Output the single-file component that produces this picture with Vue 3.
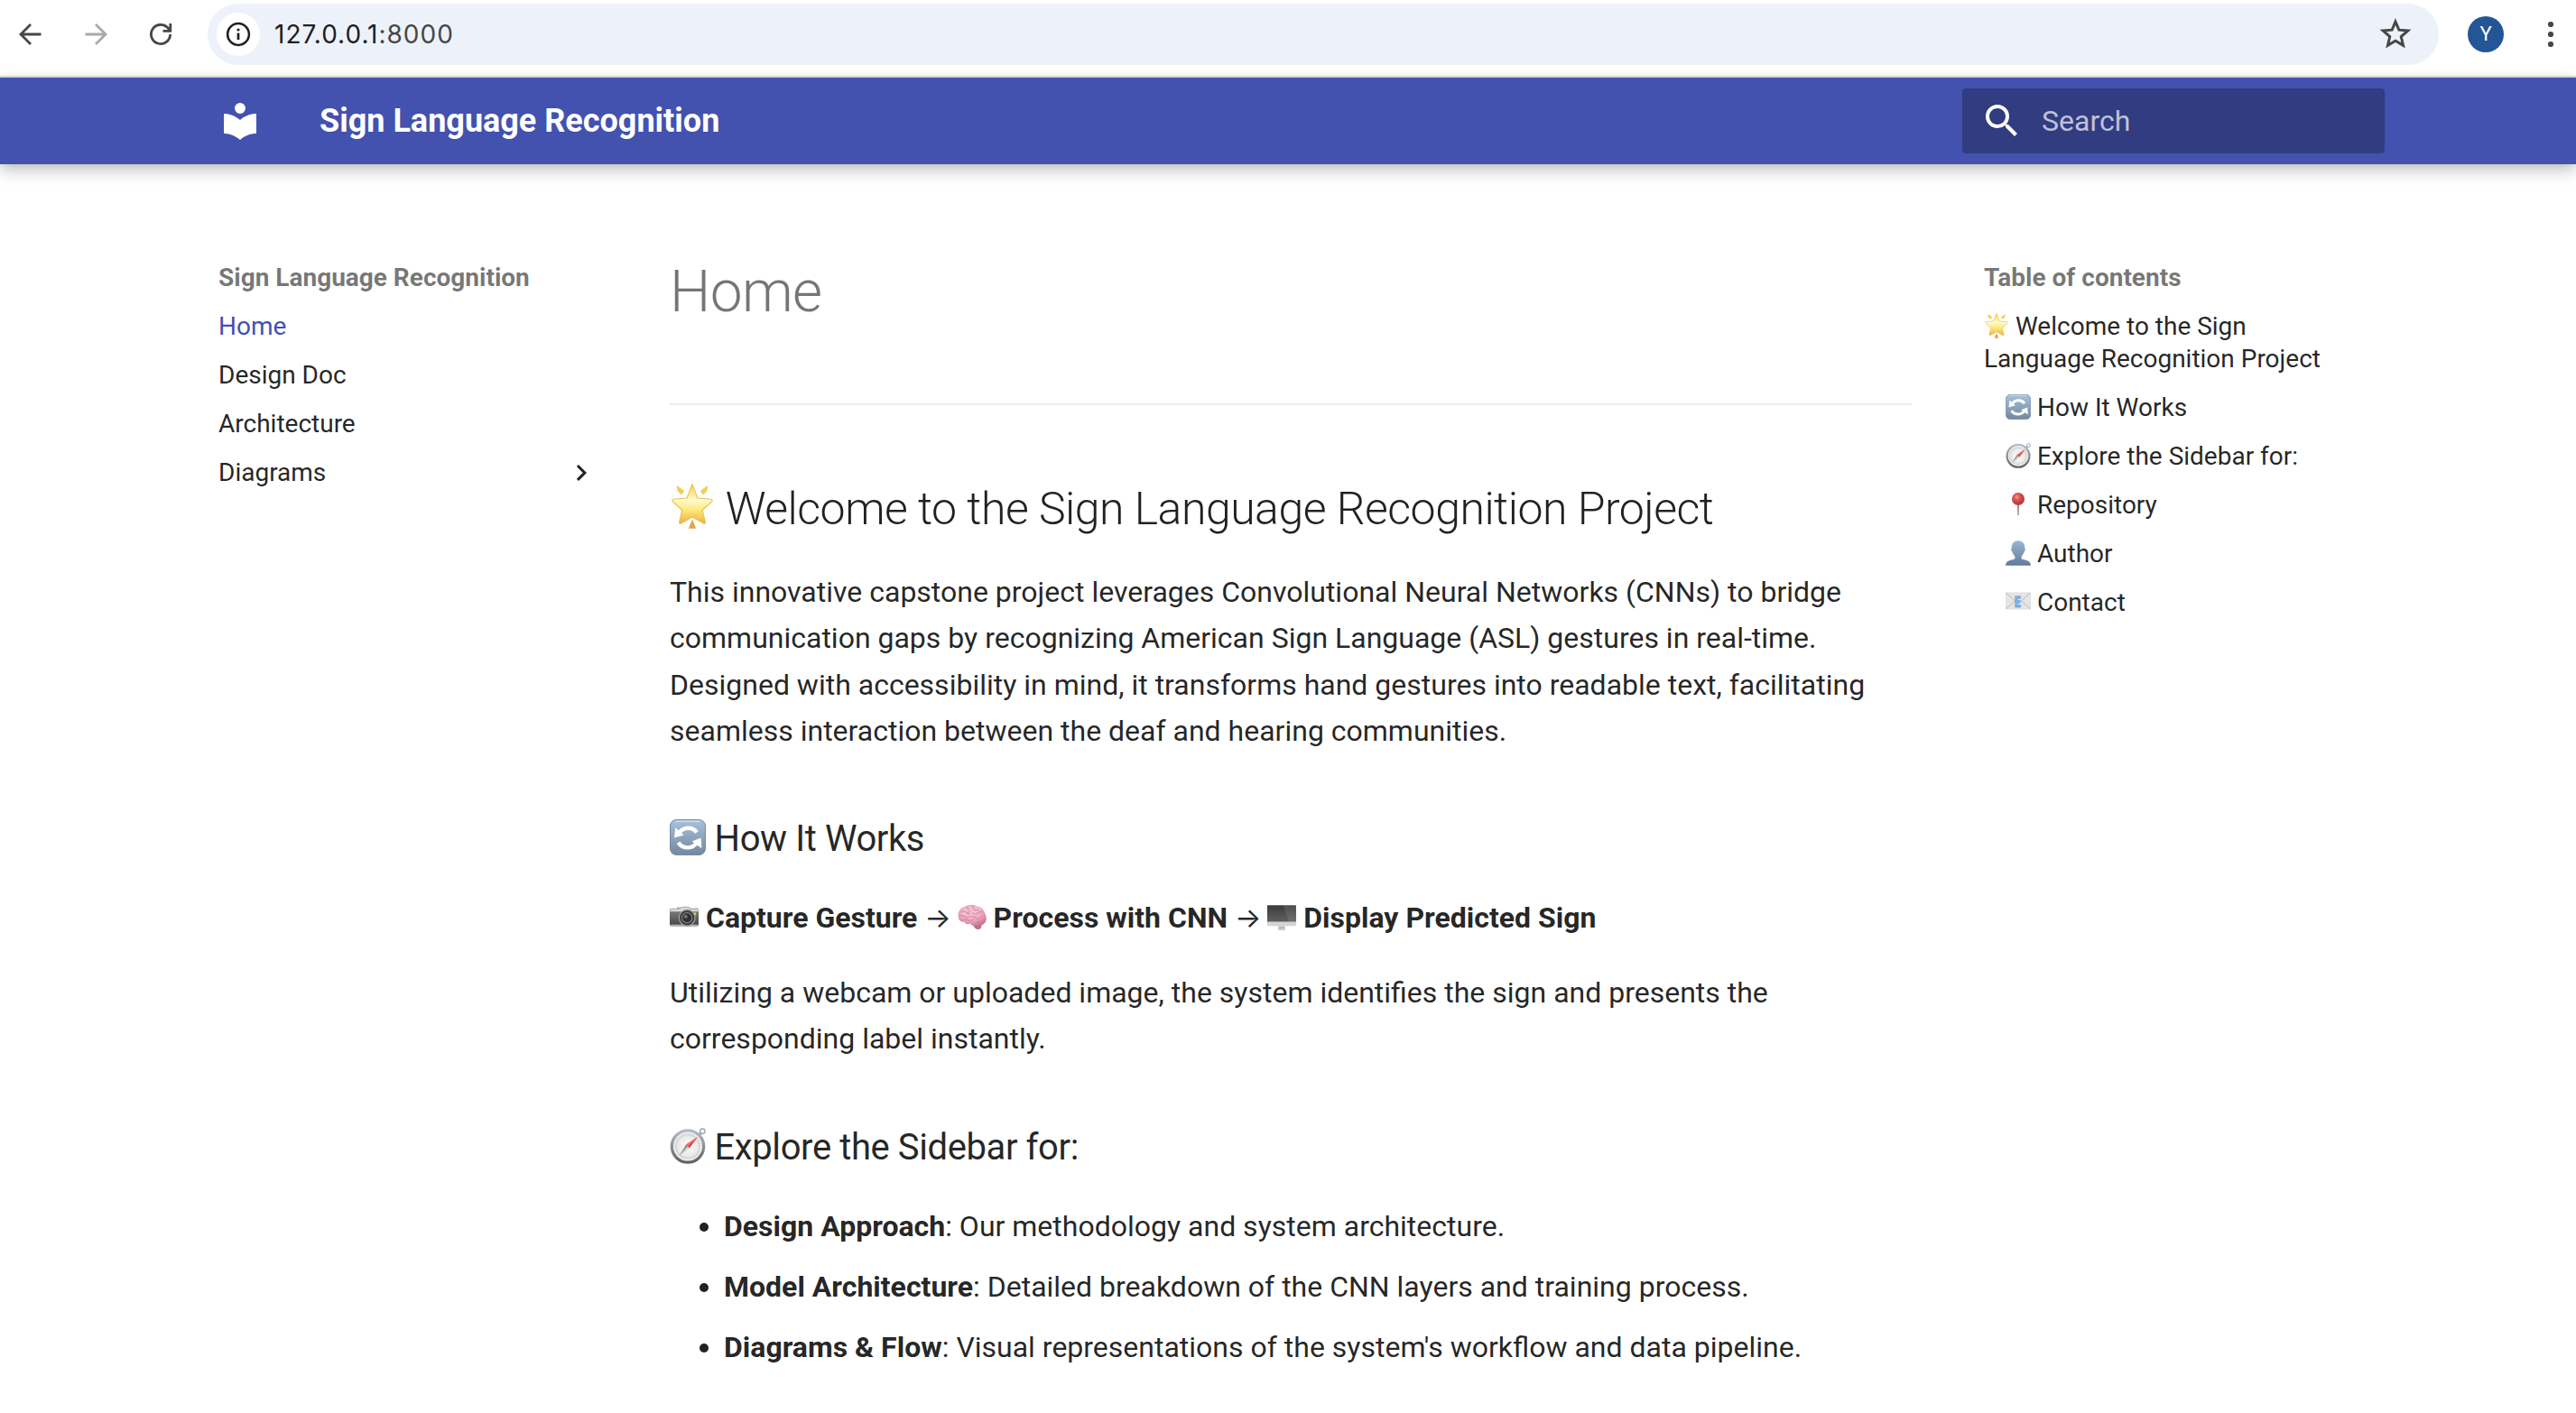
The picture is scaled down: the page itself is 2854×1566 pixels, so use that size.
<script setup>
const navItems = [
  { label: 'Home', active: true },
  { label: 'Design Doc' },
  { label: 'Architecture' },
  { label: 'Diagrams', nested: true },
]

const tocItems = [
  { icon: 'refresh', label: 'How It Works' },
  { icon: 'compass', label: 'Explore the Sidebar for:' },
  { icon: 'pin', label: 'Repository' },
  { icon: 'person', label: 'Author' },
  { icon: 'mail', label: 'Contact' },
]

const topics = [
  { name: 'Design Approach', text: 'Our methodology and system architecture.' },
  { name: 'Model Architecture', text: 'Detailed breakdown of the CNN layers and training process.' },
  { name: 'Diagrams & Flow', text: "Visual representations of the system's workflow and data pipeline." },
]
</script>

<template>
  <div class="window">
    <svg class="sprite" width="0" height="0" aria-hidden="true">
      <defs>
        <linearGradient id="g-star" x1="0" y1="0" x2="0" y2="1">
          <stop offset="0" stop-color="#f8d24e" /><stop offset=".4" stop-color="#fffbd0" />
          <stop offset=".65" stop-color="#fdea7c" /><stop offset="1" stop-color="#e9b045" />
        </linearGradient>
        <linearGradient id="g-blue" x1="0" y1="0" x2="0" y2="1">
          <stop offset="0" stop-color="#a9c1dc" /><stop offset="1" stop-color="#73879f" />
        </linearGradient>
        <linearGradient id="g-person" x1="0" y1="0" x2="0" y2="1">
          <stop offset="0" stop-color="#9db6d0" /><stop offset="1" stop-color="#5f7c9d" />
        </linearGradient>
        <linearGradient id="g-rim" x1="0" y1="0" x2="0" y2="1">
          <stop offset="0" stop-color="#b3bdc9" /><stop offset="1" stop-color="#5f6266" />
        </linearGradient>
        <radialGradient id="g-face"><stop offset="0" stop-color="#fff" /><stop offset="1" stop-color="#dcdcdc" /></radialGradient>
        <radialGradient id="g-red" cx=".4" cy=".35"><stop offset="0" stop-color="#f19a92" /><stop offset=".5" stop-color="#dc5550" /><stop offset="1" stop-color="#b9403e" /></radialGradient>
        <radialGradient id="g-brain" cx=".45" cy=".35" r=".7"><stop offset="0" stop-color="#f9c6d6" /><stop offset=".6" stop-color="#eba3bb" /><stop offset="1" stop-color="#c9708e" /></radialGradient>
        <linearGradient id="g-cam" x1="0" y1="0" x2="0" y2="1">
          <stop offset="0" stop-color="#777" /><stop offset="1" stop-color="#454545" />
        </linearGradient>
        <linearGradient id="g-screen" x1="0" y1="0" x2="0" y2="1">
          <stop offset="0" stop-color="#3b3b3b" /><stop offset="1" stop-color="#686868" />
        </linearGradient>
      </defs>
      <symbol id="e-star" viewBox="0 0 40 40">
        <g transform="translate(1.400 0) scale(.93 1)">
          <path fill="url(#g-star)" stroke="#edc04c" stroke-width="1" stroke-linejoin="round" d="M20 .5 25 12.800 38 13.800C39.300 14.200 39.300 15.300 38.400 16L29.600 23.600 32.400 34.400C32.400 35.400 31.600 35.700 30.800 35.200L20 29.600 9.200 35.200C8.400 35.700 7.600 35.400 7.600 34.400L10.400 23.600 1.600 16C.7 15.300.7 14.200 2 13.800L15 12.800Z" />
          <path fill="#f1ce55" d="M5.500 1.500 12.500 6.500 10 9.700Q4.500 7.500 5.500 1.500ZM34.500 1.500 27.500 6.500 30 9.700Q35.500 7.500 34.500 1.500Z" />
          <path fill="#dfa745" d="M20 31.500 23.600 39.800H16.400Z" />
        </g>
      </symbol>
      <symbol id="e-refresh" viewBox="0 0 40 40">
        <rect x=".5" y=".5" width="39" height="39" rx="7" fill="url(#g-blue)" stroke="#7489a3" />
        <path d="M7 2.2H33" stroke="#cfdded" stroke-width="1.4" stroke-linecap="round" />
        <g fill="none" stroke="#fff" stroke-width="4.4">
          <path d="M10.5 15.5C14 8.6 25 7.4 30 14.6" /><path d="M30 25.5C26 33 14.5 33.6 9.5 25.8" />
        </g>
        <path fill="#fff" d="M6.3 9.2 5 20.6 15.6 17.4ZM34.6 20.6 35.4 32.2 24.6 24.6Z" />
      </symbol>
      <symbol id="e-compass" viewBox="0 0 40 40">
        <circle cx="36.3" cy="3.8" r="2.7" fill="none" stroke="#a3abb4" stroke-width="1.5" />
        <path d="M32.5 7.5 34.6 5.5" stroke="#98a0aa" stroke-width="3" />
        <circle cx="20" cy="20.5" r="17.7" fill="url(#g-face)" stroke="url(#g-rim)" stroke-width="3.2" />
        <circle cx="20" cy="20.5" r="15.3" fill="none" stroke="#f3f3f3" stroke-width="1" />
        <circle cx="20" cy="20.5" r="13" fill="none" stroke="#b5b5b5" stroke-width="1.6" stroke-dasharray=".6 1.3" />
        <path fill="#8d9092" d="M10.6 30.8 18 18.5 22 22.3Z" />
        <path fill="#d9dadb" d="M10.6 30.8 20 20.5 22 22.3Z" />
        <path fill="#e1403d" d="M31 10 18 18.5 22 22.3Z" />
        <path fill="#f2736b" d="M31 10 18 18.5 20 20.4Z" />
      </symbol>
      <symbol id="e-pin" viewBox="0 0 40 40">
        <path d="M18.6 18H21.6L21 37.6H19.2Z" fill="#998c85" />
        <circle cx="20" cy="11.5" r="10" fill="url(#g-red)" />
      </symbol>
      <symbol id="e-person" viewBox="0 0 40 40">
        <path fill="url(#g-person)" d="M20 .5C26.5.5 30.6 5 30.4 12 31.8 12.5 31.5 16.5 29.6 17.6 28.8 20.8 27.4 22.7 25.3 24.6V29.2C33 31.6 39.6 31.5 39.9 39.5H.1C.4 31.5 7 31.6 14.7 29.2V24.6C12.6 22.7 11.2 20.8 10.4 17.6 8.5 16.5 8.2 12.5 9.6 12 9.4 5 13.5.5 20 .5Z" />
      </symbol>
      <symbol id="e-mail" viewBox="0 0 40 40">
        <rect x=".5" y="7" width="39" height="26" rx="1" fill="#e4e5e6" stroke="#d3d4d6" stroke-width=".8" />
        <path d="M1 7.5 20 24 39 7.5M1 32.5 15 20M39 32.5 25 20" fill="none" stroke="#a9abad" stroke-width="1.1" />
        <path d="M24.500 13.700H17.500V27.600H24.500M17.500 20.600H23.500" fill="none" stroke="#6d8fb8" stroke-width="4.2" transform="translate(-.4 .6)" />
        <path d="M24.500 13.700H17.500V27.600H24.500M17.500 20.600H23.500" fill="none" stroke="#7db7f2" stroke-width="2.800" />
      </symbol>
      <symbol id="e-camera" viewBox="0 0 40 40">
        <path fill="#a9a9a9" d="M4 8.5H10V7H15L18 6H26L29 8H38.5Q40 8.5 40 10V14H0V10Q0 8.5 2 8.5Z" />
        <path fill="#d8d8d8" d="M1 9.7H13L17 7.3H26L28.6 9.7H39V12.5H1Z" />
        <path fill="url(#g-cam)" d="M0 13H40V31Q40 33 38 33H2Q0 33 0 31Z" />
        <path fill="#b9b9b9" d="M0 31H40Q40 33.5 38 33.5H2Q0 33.5 0 31Z" />
        <circle cx="24" cy="21.5" r="11.8" fill="#9b9b9b" />
        <circle cx="24" cy="21.5" r="10.2" fill="#3d3d3d" />
        <circle cx="24" cy="21.5" r="7.6" fill="#858585" />
        <circle cx="24" cy="21.5" r="6.2" fill="#303030" />
        <circle cx="22.2" cy="19.8" r="2.4" fill="#77808a" />
        <circle cx="35" cy="15.8" r="1.7" fill="#f0c64b" />
      </symbol>
      <symbol id="e-brain" viewBox="0 0 40 40">
        <path fill="#b9718b" d="M21 29H32L33 35Q32 38 27 37.6Q22.500 36.500 21 29Z" />
        <path fill="url(#g-brain)" d="M1 20C-.5 12 5 7 10 6 14 3 22 2.500 27 5.500 33 6 37 11 37.500 15 41 20 40 27 36.500 29.500 34 33 29 33.500 26 31.500 22 33.500 18.500 32 17.500 29.500 13.500 31.500 9.500 29.500 9 27 4 27.500 1 24 1 20Z" />
        <path fill="none" stroke="#cf7f9b" stroke-width="1.1" stroke-linecap="round" d="M5 13Q9 10 11 13T18 12M12 6.500Q16 8 15 11M21 5Q19 9 23 11T29 9M3 19Q8 17 10 20T17 18.500M20 14Q22 18 27 15T33 13M7 25Q12 22 15 25T22 23.500M19 20Q24 19 26 22T34 20M25 28Q28 25 31 27T37 25M13 15Q15 17 17 15.500" />
        <path fill="none" stroke="#fde0e9" stroke-width=".9" stroke-linecap="round" d="M7 10.500Q10 8.500 12 10M17 6.500Q19 6 20 8M26 7.500Q30 8 32 10.500M6 16Q9 15 11 17M22 13Q25 14 27 12.500" />
      </symbol>
      <symbol id="e-monitor" viewBox="0 0 40 40">
        <path fill="#b8babc" d="M15.500 33H24.500V38.500H15.500Z" /><path fill="#d4d5d6" d="M15 37H25V39H15Z" />
        <rect x="0" y="4" width="40" height="28" rx="1" fill="url(#g-screen)" />
        <path fill="#fff" opacity=".1" d="M22 4H40V27H30Z" />
        <path fill="#d2d4d6" d="M0 27H40V31.500Q40 32.800 38.700 32.800H1.300Q0 32.800 0 31.500Z" />
      </symbol>
    </svg>

    <div class="toolbar">
      <svg class="tool back" viewBox="0 0 36 36"><path d="M29.500 18H7.500M18 7 7 18 18 29" /></svg>
      <svg class="tool forward" viewBox="0 0 36 36"><path d="M6.500 18H28.500M18 7 29 18 18 29" /></svg>
      <svg class="tool reload" viewBox="0 0 36 36"><path d="M28.600 18A10.600 10.600 0 1 1 25.300 10.300L28.500 13.600M28.800 6V14.300H20.500" /></svg>
      <div class="omnibox">
        <span class="site-info">
          <svg viewBox="0 0 28 28" width="28" height="28"><circle cx="14" cy="14" r="11.900" fill="none" stroke="#1f1f1f" stroke-width="2.500" /><path d="M14 12.600V20" stroke="#1f1f1f" stroke-width="2.700" /><circle cx="14" cy="9" r="1.600" fill="#1f1f1f" /></svg>
        </span>
        <span class="url">127.0.0.1<span class="port">:8000</span></span>
        <svg class="bookmark" viewBox="0 0 24 24"><path d="m12 3.600 2.300 5.500 6 .5-4.550 3.950 1.370 5.850L12 16.300l-5.120 3.100 1.370-5.850L3.700 9.600l6-.5z" /></svg>
      </div>
      <span class="avatar">Y</span>
      <svg class="more" viewBox="0 0 8 32"><circle cx="4" cy="5" r="3.100" /><circle cx="4" cy="16" r="3.100" /><circle cx="4" cy="27" r="3.100" /></svg>
    </div>

    <header class="header">
      <svg class="logo" viewBox="0 0 24 24"><path d="M12 8a3 3 0 0 0 3-3 3 3 0 0 0-3-3 3 3 0 0 0-3 3 3 3 0 0 0 3 3m0 3.540C9.640 9.350 6.500 8 3 8v11c3.500 0 6.640 1.350 9 3.540 2.360-2.190 5.500-3.540 9-3.540V8c-3.500 0-6.640 1.350-9 3.540Z" /></svg>
      <span class="site-title">Sign Language Recognition</span>
      <div class="search">
        <svg viewBox="0 0 24 24"><path d="M9.500 3A6.500 6.500 0 0 1 16 9.500c0 1.610-.59 3.090-1.560 4.230l.27.270h.79l5 5-1.500 1.500-5-5v-.79l-.27-.27A6.516 6.516 0 0 1 9.500 16 6.500 6.500 0 0 1 3 9.500 6.500 6.500 0 0 1 9.500 3m0 2C7 5 5 7 5 9.500S7 14 9.500 14 14 12 14 9.500 12 5 9.500 5Z" /></svg>
        <span>Search</span>
      </div>
    </header>

    <div class="main">
      <nav class="sidebar">
        <div class="nav-title">Sign Language Recognition</div>
        <div v-for="item in navItems" :key="item.label" class="nav-item" :class="{ active: item.active }">
          <span>{{ item.label }}</span>
          <svg v-if="item.nested" class="chevron" viewBox="0 0 24 24"><path d="M8.590 16.580 13.170 12 8.590 7.410 10 6l6 6-6 6z" /></svg>
        </div>
      </nav>

      <article class="content">
        <h1>Home</h1>
        <hr />
        <h2><svg class="emoji"><use href="#e-star" /></svg> Welcome to the Sign Language Recognition Project</h2>
        <p>
          This innovative capstone project leverages Convolutional Neural Networks (CNNs) to bridge<br />
          communication gaps by recognizing American Sign Language (ASL) gestures in real-time.<br />
          Designed with accessibility in mind, it transforms hand gestures into readable text, facilitating<br />
          seamless interaction between the deaf and hearing communities.
        </p>
        <h3><svg class="emoji"><use href="#e-refresh" /></svg> How It Works</h3>
        <p>
          <svg class="emoji"><use href="#e-camera" /></svg> <strong>Capture Gesture</strong> <span class="arrow">→</span> <svg class="emoji"><use href="#e-brain" /></svg> <strong>Process with CNN</strong> <span class="arrow">→</span> <svg class="emoji"><use href="#e-monitor" /></svg> <strong>Display Predicted Sign</strong>
        </p>
        <p>
          Utilizing a webcam or uploaded image, the system identifies the sign and presents the<br />
          corresponding label instantly.
        </p>
        <h3><svg class="emoji"><use href="#e-compass" /></svg> Explore the Sidebar for:</h3>
        <ul>
          <li v-for="topic in topics" :key="topic.name"><strong>{{ topic.name }}</strong>: {{ topic.text }}</li>
        </ul>
      </article>

      <nav class="sidebar toc">
        <div class="nav-title">Table of contents</div>
        <div class="nav-item wrap"><svg class="emoji"><use href="#e-star" /></svg> Welcome to the Sign<br />Language Recognition Project</div>
        <div v-for="item in tocItems" :key="item.label" class="nav-item wrap child">
          <svg class="emoji"><use :href="'#e-' + item.icon" /></svg> {{ item.label }}
        </div>
      </nav>
    </div>
  </div>
</template>

<style>
body {
  margin: 0;
  background: #fff;
}
</style>

<style scoped>
.window {
  width: 2854px;
  height: 1566px;
  overflow: hidden;
  background: #fff;
  color: rgba(0, 0, 0, 0.87);
  font-family: Roboto, "Liberation Sans", sans-serif;
  font-size: 32px;
  -webkit-font-smoothing: antialiased;
}
.sprite {
  position: absolute;
}
.toolbar {
  box-sizing: border-box;
  height: 86px;
  padding: 4px 24px 0 16px;
  display: flex;
  align-items: flex-start;
  border-bottom: 2px solid #e1e2e4;
  background: #fff;
}
.tool {
  width: 36px;
  height: 36px;
  margin: 16px 36px 0 0;
  fill: none;
  stroke: #474747;
  stroke-width: 2.8;
}
.forward {
  stroke: #a9a9a9;
}
.reload {
  margin-right: 34px;
}
.omnibox {
  box-sizing: border-box;
  width: 2472px;
  flex: none;
  height: 68px;
  padding: 0 28px 0 10px;
  display: flex;
  align-items: center;
  border-radius: 34px;
  background: #edf2fa;
}
.site-info {
  width: 48px;
  height: 48px;
  display: flex;
  align-items: center;
  justify-content: center;
  border-radius: 50%;
  background: #fff;
}
.url {
  margin-left: 16px;
  flex: 1;
  font-family: Inter, Roboto, sans-serif;
  font-size: 28px;
  letter-spacing: 1px;
  color: #1f1f1f;
}
.port {
  color: #474747;
}
.bookmark {
  width: 40px;
  height: 40px;
  fill: none;
  stroke: #474747;
  stroke-width: 1.8;
}
.avatar {
  flex: none;
  width: 40px;
  height: 40px;
  margin: 14px 48px 0 32px;
  border-radius: 50%;
  background: #235697;
  color: #fff;
  font-size: 22px;
  line-height: 40px;
  text-align: center;
}
.more {
  flex: none;
  width: 8px;
  height: 32px;
  margin-top: 18px;
  fill: #474747;
}
.header {
  position: relative;
  box-sizing: border-box;
  height: 96px;
  padding: 0 212px 0 242px;
  display: flex;
  align-items: center;
  background: #4351af;
  color: #fff;
  box-shadow: 0 0 8px rgba(0, 0, 0, 0.1), 0 8px 16px rgba(0, 0, 0, 0.2);
}
.logo {
  width: 48px;
  height: 48px;
  fill: #fff;
}
.site-title {
  flex: 1;
  margin-left: 64px;
  font-size: 36px;
  font-weight: 700;
}
.search {
  box-sizing: border-box;
  width: 468px;
  height: 72px;
  padding-left: 20px;
  display: flex;
  align-items: center;
  border-radius: 4px;
  background: rgba(0, 0, 0, 0.26);
  color: rgba(255, 255, 255, 0.7);
}
.search svg {
  width: 48px;
  height: 48px;
  margin-right: 20px;
  fill: #fff;
}
.main {
  display: flex;
  width: 2440px;
  padding: 60px 0 0 210px;
}
.sidebar {
  box-sizing: border-box;
  width: 484px;
  padding: 48px 32px;
  font-size: 28px;
  line-height: 36.4px;
}
.nav-title {
  font-weight: 700;
  color: rgba(0, 0, 0, 0.54);
}
.nav-item {
  margin-top: 17.5px;
  display: flex;
  justify-content: space-between;
  align-items: center;
  white-space: nowrap;
}
.nav-item.wrap {
  display: block;
}
.nav-item.child {
  padding-left: 24px;
}
.active {
  color: #4351af;
}
.chevron {
  width: 36px;
  height: 36px;
  fill: rgba(0, 0, 0, 0.87);
}
.content {
  box-sizing: border-box;
  width: 1472px;
  padding: 40px 48px 0;
  line-height: 51.2px;
  white-space: nowrap;
}
h1 {
  margin: 0 0 82px;
  font-size: 64px;
  font-weight: 300;
  line-height: 83.2px;
  letter-spacing: -0.64px;
  color: rgba(0, 0, 0, 0.54);
}
hr {
  margin: 0;
  border: 0;
  border-bottom: 2px solid #ececec;
}
h2 {
  margin: 80px 0 32px;
  font-size: 50px;
  font-weight: 300;
  line-height: 70px;
  letter-spacing: -0.5px;
}
h3 {
  margin: 64px 0 32px;
  font-size: 40px;
  font-weight: 400;
  line-height: 60px;
  letter-spacing: -0.4px;
}
p {
  margin: 32px 0;
}
.emoji {
  display: inline-block;
  width: 1em;
  height: 1em;
  vertical-align: -0.13em;
}
h2 .emoji {
  vertical-align: -0.1em;
}
.arrow {
  display: inline-block;
  width: 28.4px;
  font-family: Inter, sans-serif;
  font-size: 31px;
  line-height: 1;
  text-align: center;
}
ul {
  margin: 32px 0;
  padding: 0 0 0 60px;
  list-style: disc;
}
li {
  margin-bottom: 16px;
}
strong {
  font-weight: 700;
}
</style>
